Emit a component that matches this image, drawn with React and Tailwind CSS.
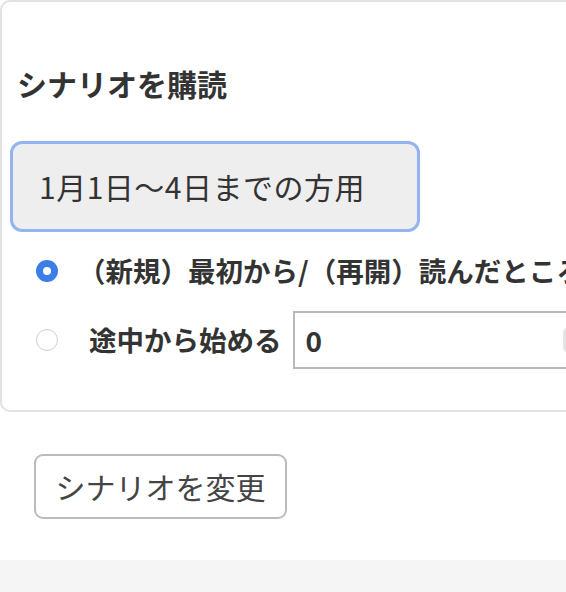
import React, { useState } from 'react';

// 購読設定カード
export default function App() {
  const [mode, setMode] = useState('start');
  const [offset, setOffset] = useState('0');

  const radio = (on) => on
    ? 'shrink-0 ml-[34px] w-[22px] h-[22px] rounded-full bg-[#3b7de9] flex items-center justify-center'
    : 'shrink-0 ml-[34px] w-[22px] h-[22px] rounded-full border border-[#cfcfcf] bg-white';

  return (
    <div className="w-full h-[592px] overflow-hidden bg-white font-['Noto_Sans_CJK_JP','Noto_Sans',sans-serif] text-[#333]">
      <div className="w-[620px] border-2 border-[#e2e2e2] rounded-[10px] pt-[62px] pb-[41px]">
        <h2 className="ml-[15px] text-[30px] leading-[38px] font-bold text-[#333]">シナリオを購読</h2>

        <div className="mt-[39px] ml-[8px] w-[410px] h-[91px] border-[3px] border-[#93b4f0] rounded-[12px] bg-[#eeeeee] flex items-center pl-[26px]">
          <span className="text-[30px] tracking-[0.5px] text-[#333]">1月1日〜4日までの方用</span>
        </div>

        <div className="mt-[14px] flex flex-col gap-[15px]">
          <label className="flex items-center h-[50px] cursor-pointer" onClick={() => setMode('start')}>
            <span className={radio(mode === 'start')}>
              {mode === 'start' && <span className="w-[8px] h-[8px] rounded-full bg-white" />}
            </span>
            <span className="shrink-0 ml-[20px] text-[27.5px] font-bold whitespace-nowrap">（新規）最初から/（再開）読んだところから</span>
          </label>

          <div className="flex items-center h-[58px]">
            <label className="flex items-center shrink-0 cursor-pointer" onClick={() => setMode('middle')}>
              <span className={radio(mode === 'middle')}>
                {mode === 'middle' && <span className="w-[8px] h-[8px] rounded-full bg-white" />}
              </span>
              <span className="ml-[31px] text-[27.5px] font-bold whitespace-nowrap">途中から始める</span>
            </label>
            <div className="relative shrink-0 ml-[11px]">
              <input
                type="text"
                value={offset}
                onChange={(e) => setOffset(e.target.value)}
                className="w-[300px] h-[58px] border-2 border-[#b8b8b8] pl-[11px] text-[28px] font-bold text-[#333] outline-none"
              />
              <span className="absolute left-[270px] top-[16px] w-[14px] h-[26px] rounded-l-[6px] bg-[#e4e4e4]" />
            </div>
          </div>
        </div>
      </div>

      <div className="pt-[42px] pb-[41px] pl-[34px]">
        <button className="w-[253px] h-[65px] border-2 border-[#bbbbbb] rounded-[9px] bg-white text-[30px] text-[#444]">
          シナリオを変更
        </button>
      </div>

      <div className="h-[40px] bg-[#f5f5f5]" />
    </div>
  );
}
